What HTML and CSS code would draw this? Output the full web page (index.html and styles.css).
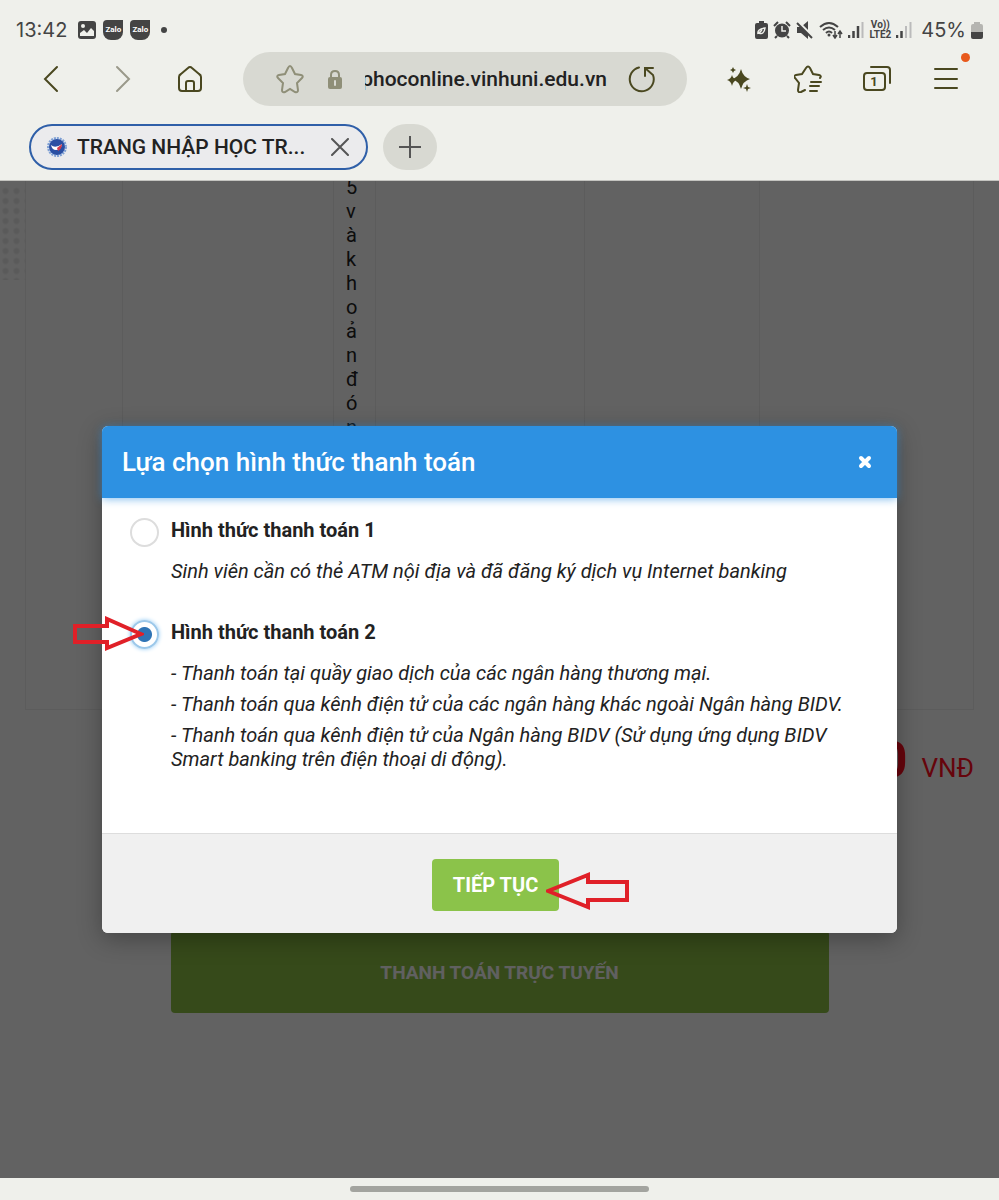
FILE: index.html
```html
<!DOCTYPE html>
<html lang="vi">
<head>
  <meta charset="UTF-8" />
  <meta name="viewport" content="width=device-width, initial-scale=1.0"/>
  <title>TRANG NHẬP HỌC</title>
  <link rel="stylesheet" href="styles.css">
</head>
<body>
  <header class="browser">
    <div class="status">
      <div class="status-left">
        <span class="clock">13:42</span>
        <svg width="18" height="18" viewBox="0 0 18 18"><rect width="18" height="18" rx="3" fill="#444"/><circle cx="5" cy="5" r="2" fill="#eff0eb"/><path d="M2 15v-3l4-3 3 3 4-5 3 3v5z" fill="#eff0eb"/></svg>
        <span class="zalo">Zalo</span>
        <span class="zalo">Zalo</span>
        <span class="dot"></span>
      </div>
      <div class="status-right">
        <svg width="13" height="18" viewBox="0 0 13 18"><path d="M4 0h5v2h2q2 0 2 2v12q0 2-2 2H2q-2 0-2-2V4q0-2 2-2h2z" fill="#444"/><path d="M3 13q-1-5 7-6-1 7-6 5l3-3" fill="none" stroke="#eff0eb" stroke-width="1.5"/></svg>
        <svg width="18" height="18" viewBox="0 0 18 18"><circle cx="9" cy="9.500" r="7" fill="#444"/><path d="M1 5l4-4M17 5l-4-4M4 15l-2 2M14 15l2 2" stroke="#444" stroke-width="2"/><path d="M9 5v5h4" fill="none" stroke="#eff0eb" stroke-width="1.500"/></svg>
        <svg width="18" height="18" viewBox="0 0 18 18"><path d="M1 6h4l7-6v18l-7-6H1z" fill="#444"/><path d="M1 0l17 17" stroke="#eff0eb" stroke-width="3"/><path d="M1 2l15 15" stroke="#444" stroke-width="2"/></svg>
        <svg width="24" height="18" viewBox="0 0 24 18"><path d="M1 6q9-8 18 0M4 9q6-5 12 0M7 12q3-3 6 0" fill="none" stroke="#444" stroke-width="2"/><circle cx="10" cy="14" r="1.500" fill="#444"/><path d="M16 10v6m-2-2l2 3 2-3M21 17v-6m-2 2l2-3 2 3" fill="none" stroke="#444" stroke-width="1.500"/></svg>
        <svg width="16" height="16" viewBox="0 0 16 16"><path d="M1 13v3M5.500 9v7M10 4v12" stroke="#444" stroke-width="2.500"/><path d="M14.500 0v16" stroke="#bbb" stroke-width="2"/></svg>
        <span class="volte">Vo))<br>LTE2</span>
        <svg width="16" height="16" viewBox="0 0 16 16"><path d="M1 13v3M5.500 9v7" stroke="#444" stroke-width="2.500"/><path d="M10 4v12M14.500 0v16" stroke="#bbb" stroke-width="2"/></svg>
        <span class="percent">45%</span>
        <svg width="12" height="17" viewBox="0 0 12 17"><path d="M3 0h6v2h1q2 0 2 2v7H0V4q0-2 2-2h1z" fill="#b5b5b1"/><path d="M0 10h12v5q0 2-2 2H2q-2 0-2-2z" fill="#444"/></svg>
      </div>
    </div>

    <nav class="toolbar">
      <button class="tool" aria-label="Quay lại"><svg width="28" height="28" viewBox="0 0 28 28"><path d="M19 2L7 14l12 12"/></svg></button>
      <button class="tool muted" aria-label="Tiến"><svg width="28" height="28" viewBox="0 0 28 28"><path d="M10 2l12 12-12 12"/></svg></button>
      <button class="tool" aria-label="Trang chủ"><svg width="28" height="28" viewBox="0 0 28 28"><path d="M3 12q0-2 2-3l7-6q2-2 4 0l7 6q2 1 2 3v11q0 3-3 3H6q-3 0-3-3zM10 26v-8q0-2 2-2h4q2 0 2 2v8"/></svg></button>
      <div class="urlbar">
        <button class="star" aria-label="Dấu trang"><svg width="30" height="30" viewBox="0 0 30 30"><path d="M15 2q1 0 2 2l3 6 6 1q3 1 1 3l-5 5 1 7q0 3-3 2l-5-3-5 3q-3 1-3-2l1-7-5-5q-2-2 1-3l6-1 3-6q1-2 2-2z"/></svg></button>
        <svg class="lock" width="14" height="19" viewBox="0 0 14 19"><path d="M3 8V5q0-4 4-4t4 4v3"/><rect class="lock-body" y="7" width="14" height="12" rx="2"/><path class="lock-hole" d="M7 11v4"/></svg>
        <input class="url" type="text" dir="rtl" aria-label="Địa chỉ" value="phoconline.vinhuni.edu.vn">
        <button class="reload" aria-label="Tải lại"><svg width="28" height="28" viewBox="0 0 28 28"><path d="M12 2.500A12 12 0 1 0 26 10L18 3M18 11V3h8"/></svg></button>
      </div>
      <button class="tool" aria-label="Trợ lý"><svg width="26" height="26" viewBox="0 0 26 26"><path class="solid" d="M15 3q2 8 9 10-7 2-9 10-2-8-9-10 7-2 9-10zM6 9q1 4 5 5-4 1-5 6-1-5-5-6 4-1 5-5zM7 1l1 2 2 1-2 1-1 2-1-2-2-1 2-1zM21 18l1 3 3 1-3 1-1 3-1-3-3-1 3-1z"/></svg></button>
      <button class="tool" aria-label="Danh sách dấu trang"><svg width="28" height="28" viewBox="0 0 28 28"><path d="M11 25l-4 2q-3 1-3-2l1-7-4-5q-2-2 1-3l6-1 4-6q2-3 4 0l3 6 6 1q3 1 1 3M17 17h10M16 21h9M16 26h7"/></svg></button>
      <button class="tool" aria-label="Các thẻ đang mở"><svg width="30" height="28" viewBox="0 0 30 28"><rect x="2" y="8" width="21" height="17" rx="3"/><path d="M9 2h16q3 0 3 3v13"/><text x="12" y="21">1</text></svg></button>
      <button class="tool menu" aria-label="Trình đơn"><svg width="24" height="24" viewBox="0 0 24 24"><path d="M1 2h22M1 12h22M1 21h22"/></svg><span class="notice"></span></button>
    </nav>

    <div class="tabs">
      <div class="tab">
        <svg width="22" height="22" viewBox="0 0 22 22"><circle cx="11" cy="11" r="9" fill="#dce6f5" stroke="#7fa0d4" stroke-width="2" stroke-dasharray="2 1"/><circle cx="11" cy="11" r="8" fill="#2a4fa3"/><path d="M5 9q4 4 11-1-1 6-6 6-4 0-5-5z" fill="#fff"/><path d="M11 12l5-4q0 5-4 7z" fill="#d33a4c"/></svg>
        <span class="tab-title">TRANG NHẬP HỌC TR...</span>
        <button class="tab-close" aria-label="Đóng thẻ"><svg width="18" height="18" viewBox="0 0 18 18"><path d="M1 1l16 16M17 1L1 17"/></svg></button>
      </div>
      <button class="tab-add" aria-label="Thẻ mới"><svg width="22" height="22" viewBox="0 0 22 22"><path d="M11 0v22M0 11h22"/></svg></button>
    </div>
  </header>

  <main class="viewport">
    <div class="page">
      <table class="fees">
        <tr>
          <td class="c1"></td>
          <td class="c2"></td>
          <td class="c3"><div class="note">5 và khoản đón</div></td>
          <td class="c4"></td>
          <td class="c5"></td>
          <td></td>
        </tr>
      </table>
      <p class="total"><strong>0</strong><span>VNĐ</span></p>
      <button class="pay">THANH TOÁN TRỰC TUYẾN</button>
    </div>

    <div class="backdrop">
      <form class="modal" role="dialog" aria-labelledby="modalTitle">
        <div class="modal-header">
          <h1 id="modalTitle">Lựa chọn hình thức thanh toán</h1>
          <button type="button" class="modal-close" aria-label="Đóng"><svg width="14" height="14" viewBox="0 0 14 14"><path d="M3 3l8 8M11 3l-8 8"/></svg></button>
        </div>
        <div class="modal-body">
          <div class="option">
            <input type="radio" id="method1" name="method">
            <label for="method1">Hình thức thanh toán 1</label>
            <div class="desc">
              <p>Sinh viên cần có thẻ ATM nội địa và đã đăng ký dịch vụ Internet banking</p>
            </div>
          </div>
          <div class="option">
            <input type="radio" id="method2" name="method" checked>
            <label for="method2">Hình thức thanh toán 2</label>
            <div class="desc">
              <p>- Thanh toán tại quầy giao dịch của các ngân hàng thương mại.</p>
              <p>- Thanh toán qua kênh điện tử của các ngân hàng khác ngoài Ngân hàng BIDV.</p>
              <p>- Thanh toán qua kênh điện tử của Ngân hàng BIDV (Sử dụng ứng dụng BIDV Smart banking trên điện thoại di động).</p>
            </div>
            <svg class="arrow arrow-right" width="72" height="36" viewBox="0 0 72 36"><path d="M3 10h32V3l34 15-34 14v-6H3z"/></svg>
          </div>
        </div>
        <div class="modal-footer">
          <div class="submit-wrap">
            <button type="submit" class="submit">TIẾP TỤC</button>
            <svg class="arrow arrow-left" width="84" height="38" viewBox="0 0 84 38"><path d="M81 10H42V3L2 19l40 16v-7h39z"/></svg>
          </div>
        </div>
      </form>
    </div>
  </main>

  <footer class="gesture"><span></span></footer>
</body>
</html>
```
FILE: styles.css
```css
* {
  box-sizing: border-box;
}

body {
  margin: 0;
  min-height: 100vh;
  display: flex;
  flex-direction: column;
  font-family: Roboto, "Liberation Sans", sans-serif;
  font-size: 20px;
  line-height: 24px;
  color: #222;
  background: #eff0eb;
}

button {
  font-family: inherit;
  padding: 0;
  border: none;
  background: none;
  cursor: pointer;
}

svg {
  display: block;
  flex: none;
}

p, h1 {
  margin: 0;
}

/* browser bars */
.browser {
  border-bottom: 1px solid #c4c4c0;
}

.status {
  display: flex;
  justify-content: space-between;
  padding: 18px 16px 10px;
  color: #444;
}

.status-left, .status-right {
  display: flex;
  align-items: center;
  height: 24px;
}

.status-left { gap: 7px; }
.status-right { gap: 5px; }

.clock, .percent {
  font-family: Inter, Roboto, sans-serif;
  font-size: 20px;
}

.clock { margin-right: 4px; }
.percent { margin-left: 4px; }

.zalo {
  width: 20px;
  height: 20px;
  border-radius: 4px 0 8px 8px;
  background: #444;
  color: #fff;
  font-size: 8px;
  line-height: 20px;
  font-weight: bold;
  text-align: center;
}

.dot {
  width: 6px;
  height: 6px;
  margin-left: 4px;
  border-radius: 50%;
  background: #444;
}

.volte {
  font-size: 10px;
  line-height: 10px;
  font-weight: bold;
  text-align: center;
}

.toolbar {
  display: flex;
  align-items: center;
  padding: 0 19px 0 17px;
}

.tool {
  display: flex;
  justify-content: center;
  width: 69px;
}

.toolbar svg, .tabs button svg {
  fill: none;
  stroke: #4a4820;
  stroke-width: 2;
  stroke-linecap: round;
}

.toolbar .muted svg { stroke: #9a998a; }
.toolbar .solid { fill: #4a4820; stroke: none; }

.toolbar text {
  fill: #4a4820;
  stroke: none;
  font-size: 13px;
  font-weight: bold;
  text-anchor: middle;
}

.menu { position: relative; }

.notice {
  position: absolute;
  top: -14px;
  right: 10px;
  width: 9px;
  height: 9px;
  border-radius: 50%;
  background: #e8591c;
}

.urlbar {
  flex: 1;
  min-width: 0;
  display: flex;
  align-items: center;
  height: 54px;
  margin: 0 17px 0 19px;
  padding: 0 32px;
  border-radius: 27px;
  background: #d8d9d2;
}

.toolbar .star svg, .toolbar .lock { stroke: #8f8f78; }
.lock { margin: 0 23px; }
.lock-body { fill: #8f8f78; stroke: none; }
.lock-hole { stroke: #d8d9d2; }

.url {
  flex: 1;
  min-width: 0;
  padding: 0;
  border: none;
  outline: none;
  background: none;
  color: #222;
  font-family: inherit;
  font-size: 21px;
  font-weight: 500;
}

.reload { margin-left: 20px; }

.tabs {
  display: flex;
  gap: 15px;
  padding: 18px 29px 10px;
}

.tab {
  display: flex;
  align-items: center;
  width: 339px;
  height: 46px;
  padding: 0 17px 0 15px;
  border: 2px solid #2f5fa8;
  border-radius: 23px;
  background: #ebebed;
}

.tab-title {
  flex: 1;
  margin-left: 9px;
  white-space: nowrap;
  font-size: 21px;
  font-weight: 500;
}

.tabs .tab-close svg, .tabs .tab-add svg { stroke: #555; }

.tab-add {
  display: grid;
  place-items: center;
  width: 54px;
  height: 46px;
  border-radius: 23px;
  background: #d8d9d2;
}

/* page behind the dialog */
.viewport {
  flex: 1;
  position: relative;
  overflow: hidden;
  background: #f5f5f5;
}

.page {
  position: relative;
  padding: 0 25px;
}

.page::before {
  content: "";
  position: absolute;
  top: 5px;
  left: 0;
  width: 26px;
  height: 94px;
  background: radial-gradient(circle, #e2e2e2 2px, transparent 4px) 0 0 / 11px 10px;
}

.fees {
  width: 100%;
  height: 529px;
  table-layout: fixed;
  border-collapse: collapse;
}

.fees td {
  border: 1px solid #e6e6e6;
  border-top: none;
  padding: 0 12px;
  vertical-align: top;
  word-break: break-all;
}

/* row is scrolled partly under the tab bar */
.note { margin-top: -6px; }

.c1 { width: 97px; }
.c2 { width: 211px; }
.c3 { width: 42px; }
.c4 { width: 209px; }
.c5 { width: 175px; }

.total {
  display: flex;
  justify-content: flex-end;
  align-items: baseline;
  gap: 14px;
  padding: 20px 0;
  line-height: 60px;
  color: #ff0a20;
}

.total strong { font-size: 50px; }
.total span { font-size: 26px; }

.pay {
  display: block;
  width: 658px;
  max-width: 100%;
  height: 82px;
  margin: 113px auto 0;
  border-radius: 4px;
  background: #88b843;
  color: #f0f0f0;
  font-size: 19px;
  font-weight: bold;
}

/* dialog */
.backdrop {
  position: absolute;
  inset: 0;
  display: grid;
  align-items: center;
  padding: 0 102px;
  background: rgba(0, 0, 0, 0.6);
}

.modal {
  border-radius: 6px;
  background: #fff;
  box-shadow: 0 6px 24px rgba(0,0,0,0.3);
}

.modal-header {
  display: flex;
  justify-content: space-between;
  align-items: center;
  height: 72px;
  padding: 0 25px 0 20px;
  border-radius: 6px 6px 0 0;
  background: #2d91e2;
  box-shadow: 0 1px 8px rgba(45,145,226,0.6);
  color: #fff;
}

.modal-header h1 {
  font-size: 26px;
  font-weight: 500;
}

.modal-close svg {
  fill: none;
  stroke: #fff;
  stroke-width: 4;
  stroke-linecap: round;
}

.modal-body {
  display: grid;
  gap: 37px;
  padding: 20px 28px 62px;
}

.option {
  position: relative;
  display: grid;
  grid-template-columns: 29px 1fr;
  column-gap: 12px;
}

.option input {
  appearance: none;
  grid-row: 1 / 3;
  width: 29px;
  height: 29px;
  margin: 0;
  border: 2px solid #ddd;
  border-radius: 50%;
  background: #fff;
}

.option input:checked {
  border-color: #9cc8ea;
  background: radial-gradient(circle, #2f74b5 7px, #fff 8px);
  box-shadow: 0 0 4px #8ec8f4;
}

.option label {
  font-weight: bold;
}

.desc {
  grid-column: 2;
  display: grid;
  gap: 7px;
  margin-top: 17px;
  font-style: italic;
}

.modal-footer {
  display: flex;
  justify-content: center;
  padding: 25px 24px 22px 16px;
  border-top: 1px solid #ddd;
  border-radius: 0 0 6px 6px;
  background: #f0f0f0;
}

.submit-wrap { position: relative; }

.submit {
  height: 52px;
  padding: 0 21px;
  border-radius: 4px;
  background: #8bc34a;
  color: #fff;
  font-size: 20px;
  font-weight: bold;
}

/* red hint arrows */
.arrow {
  position: absolute;
  fill: none;
  stroke: #e02028;
  stroke-width: 4;
}

.arrow-right { top: -4px; left: -58px; }
.arrow-left { top: 13px; left: 114px; }

/* gesture bar */
.gesture {
  display: flex;
  justify-content: center;
  padding: 8px 0;
}

.gesture span {
  width: 30%;
  height: 6px;
  border-radius: 3px;
  background: #a3a49f;
}
```
